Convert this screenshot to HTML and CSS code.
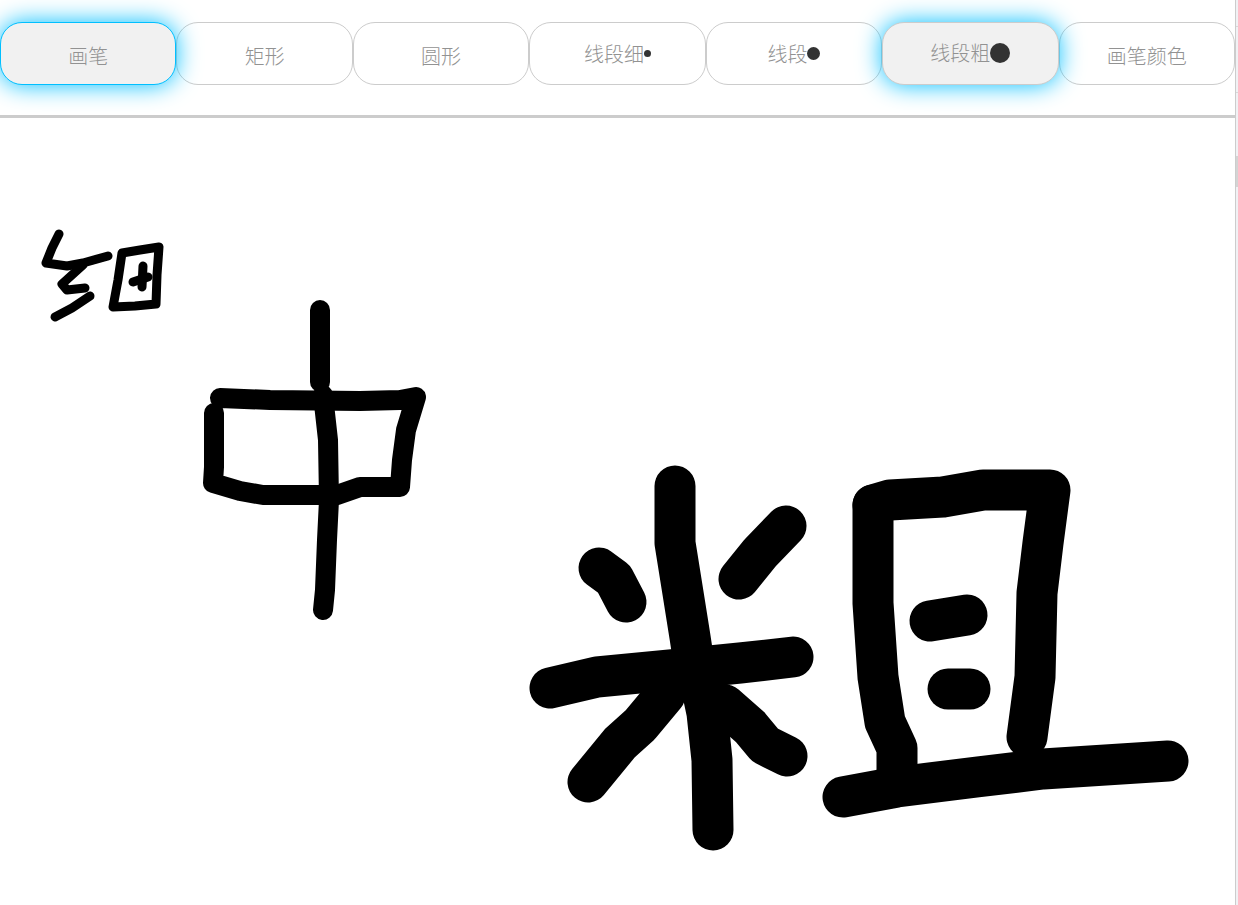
FILE: index.html
```html
<!DOCTYPE html>
<html lang="zh-CN">
<head>
  <meta charset="UTF-8">
  <title>画板</title>
  <link rel="stylesheet" href="styles.css">
</head>
<body>

<div class="window">
  <div class="page">
    <div class="toolbar">
      <button class="tool-btn active-blue">画笔</button>
      <button class="tool-btn">矩形</button>
      <button class="tool-btn">圆形</button>
      <button class="tool-btn line-btn">线段细<span class="dot dot-thin"></span></button>
      <button class="tool-btn line-btn">线段<span class="dot dot-mid"></span></button>
      <button class="tool-btn line-btn active-soft">线段粗<span class="dot dot-thick"></span></button>
      <button class="tool-btn">画笔颜色</button>
    </div>

    <svg class="board" width="1235" height="787" viewBox="0 118 1235 787">
      <g class="thin">
        <path d="M59 234L52 248L46 263L67 266L83 263L108 256"/>
        <path d="M83 265L62 284L67 290L85 288"/>
        <path d="M90 296L72 308L55 317"/>
        <path d="M122 253L140 250L159 247L157 275L156 304L135 306L113 307L118 280L122 253"/>
        <path d="M143 266L142 287"/>
        <path d="M133 282L148 277"/>
      </g>
      <g class="mid">
        <path d="M320 310L320 382"/>
        <path d="M220 398L270 400L360 401L400 400L416 397L406 430L402 460L400 487L360 487L337 495L263 495L240 491L213 483L214 467L214 413"/>
        <path d="M323 395L328 440L329 500L327 540L325 590L323 610"/>
      </g>
      <g class="thick">
        <path d="M675 486L675 543L683 593L690 637L695 670"/>
        <path d="M599 568L614 579L626 602"/>
        <path d="M786 526L760 553L739 579"/>
        <path d="M550 688L597 677L670 670L740 663L793 657"/>
        <path d="M665 695L640 725L620 743L588 782"/>
        <path d="M698 670L707 713L712 760L713 830"/>
        <path d="M725 705L750 727L765 745L787 756"/>
        <path d="M873 505L890 500L943 497L983 490L1050 490L1043 543L1037 593L1035 677L1027 737"/>
        <path d="M873 505L873 603L878 677L885 722L897 748L897 773"/>
        <path d="M930 621L967 615"/>
        <path d="M948 689L970 689"/>
        <path d="M843 797L897 787L977 777L1043 769L1168 761"/>
      </g>
    </svg>
  </div>
  <div class="scroll-strip">
    <div class="tick tick-first"></div>
    <div class="tick tick-second"></div>
    <div class="thumb"></div>
  </div>
</div>

</body>
</html>
```
FILE: styles.css
```css
html, body {
  margin: 0;
  padding: 0;
  height: 100%;
  background-color: #fff;
  overflow: hidden;
}

.window {
  display: flex;
  height: 905px;
}

.page {
  width: 1235px;
  flex: none;
  font-family: "Noto Sans CJK SC", "Liberation Sans", sans-serif;
}

.toolbar {
  display: grid;
  grid-template-columns: repeat(7, 1fr);
  padding: 22px 0 30px;
  border-bottom: 3px solid #ccc;
}

.tool-btn {
  height: 63px;
  padding: 5px 0 0;
  background: #fff;
  border: 1px solid #ccc;
  border-radius: 22px;
  color: #929292;
  font-family: inherit;
  font-size: 20px;
  font-weight: 300;
  line-height: 28px;
  position: relative;
}

.line-btn {
  padding: 1px 0 0;
}

.active-blue {
  background: #f1f1f1;
  border-color: #00bfff;
  box-shadow: 0 0 24px #00bfff;
  z-index: 1;
}

.active-soft {
  background: #f1f1f1;
  box-shadow: 0 0 24px #00bfff;
  z-index: 1;
}

.dot {
  display: inline-block;
  margin-bottom: 6px;
  background: #333;
  border-radius: 50%;
  vertical-align: middle;
}

.dot-thin {
  width: 7px;
  height: 7px;
}

.dot-mid {
  width: 13px;
  height: 13px;
}

.dot-thick {
  width: 20px;
  height: 20px;
}

.board {
  display: block;
}

.board g {
  fill: none;
  stroke: #000;
  stroke-linecap: round;
  stroke-linejoin: round;
}

.thin {
  stroke-width: 9px;
}

.mid {
  stroke-width: 20px;
}

.thick {
  stroke-width: 41px;
}

.scroll-strip {
  flex: 1;
  background: #f1f1f4;
  border-left: 1px solid #ccc;
}

.tick {
  height: 1px;
  background: #d8d8d8;
}

.tick-first {
  margin-top: 26px;
}

.tick-second {
  margin-top: 65px;
}

.thumb {
  height: 31px;
  margin-top: 63px;
  background: #d4d4d4;
}
```
